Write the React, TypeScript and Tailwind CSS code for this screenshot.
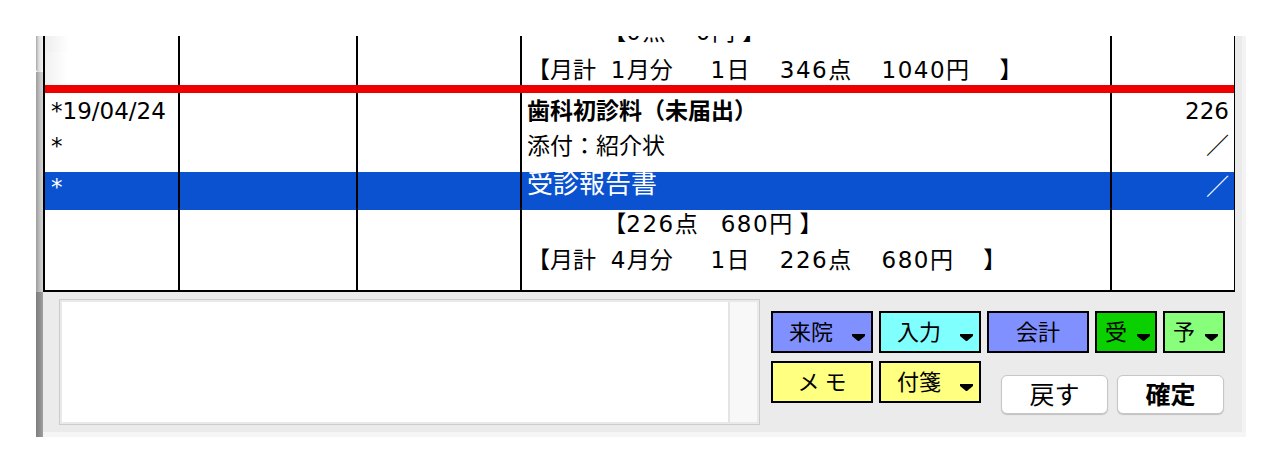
import type { ReactNode } from "react";

const tableFont = "font-['DejaVu_Sans','Noto_Sans_CJK_JP',sans-serif]";

type RowProps = {
  cells: ReactNode[];
  rowClass: string;
  cellClass?: string;
  cellClasses?: string[];
};

// widths include the 2px right rule of each cell
const widths = ["w-[135px]", "w-[178px]", "w-[164px]", "w-[590px]", "w-[122px]"];
const aligns = [
  "pl-[6px]",
  "",
  "",
  "pl-[5px]",
  "justify-end pr-[5px]",
];

function Row({ cells, rowClass, cellClass = "", cellClasses = [] }: RowProps) {
  return (
    <div className={`flex shrink-0 ${rowClass}`}>
      {cells.map((c, i) => (
        <div
          key={i}
          className={`flex h-full items-center whitespace-pre ${widths[i]} ${aligns[i]} ${
            i < 4 ? "border-r-2 border-black" : ""
          } ${cellClasses[i] ?? cellClass}`}
        >
          {c}
        </div>
      ))}
    </div>
  );
}

// figures in the totals lines run a little wider than the body text
function Num({ children }: { children: ReactNode }) {
  return <span className="tracking-[1.5px]">{children}</span>;
}

function Caret() {
  return (
    <svg width="13" height="7" viewBox="0 0 13 7" className="shrink-0">
      <path d="M0 0H13V2L7 7H6L0 2Z" fill="#000" />
    </svg>
  );
}

type KeyProps = {
  label: string;
  bg: string;
  width: string;
  caret?: boolean;
  pad?: string;
  caretPad?: string;
};

function Key({ label, bg, width, caret, pad = "pl-[16px]", caretPad = "mr-[6px]" }: KeyProps) {
  return (
    <div className={`flex h-[42px] ${width} border-2 border-black ${bg}`}>
      {caret ? (
        <>
          <span className={`self-center pb-[5px] text-[22px] leading-none ${pad}`}>{label}</span>
          <span className={`mb-[10px] ml-auto self-end ${caretPad}`}>
            <Caret />
          </span>
        </>
      ) : (
        <span className="flex-1 self-center whitespace-pre pb-[5px] text-center text-[22px] leading-none">
          {label}
        </span>
      )}
    </div>
  );
}

function PlainButton({ label, bold }: { label: string; bold?: boolean }) {
  return (
    <div
      className={`flex h-[39px] w-[107px] items-center justify-center rounded-[6px] border border-[#c6c6c6] bg-white pb-[3px] text-[25px] leading-none shadow-[0_1px_1px_rgba(0,0,0,0.18)] ${
        bold ? "font-bold" : ""
      }`}
    >
      {label}
    </div>
  );
}

export default function App() {
  return (
    <div className={`h-[474px] w-[1282px] bg-white pt-[36px] pl-[36px] text-black ${tableFont}`}>
      <div className="flex w-[1210px]">
        {/* window edge */}
        <div className="flex w-[7px] flex-col">
          <div className="h-[36px] rounded-b-[3px] bg-[linear-gradient(90deg,#a9a9a9,#dedede_40%,#f2f2f2)]" />
          <div className="h-[220px] bg-[linear-gradient(90deg,#9c9c9c,#c4c4c4_60%,#d6d6d6)]" />
          <div className="h-[145px] bg-[linear-gradient(90deg,#7e7e7e,#8f8f8f_60%,#a0a0a0)]" />
        </div>

        <div className="flex w-[1203px] flex-col">
          <div className="flex">
            <div className="flex w-[1199px] flex-col bg-[#ebebeb]">
              {/* record list */}
              <div className="w-[1192px] border-r border-b-2 border-l-2 border-black bg-white">
                <div className="flex h-[254px] flex-col overflow-hidden leading-[28px]">
                  <Row
                    rowClass="-mt-[24px] h-[40px] text-[23px]"
                    cellClasses={["bg-[linear-gradient(90deg,#ededed,#ffffff_24px)]"]}
                    cells={[
                      "",
                      "",
                      "",
                      <>
                        {"　　　 【"}
                        <Num>0</Num>
                        {"点　 "}
                        <Num>0</Num>
                        {"円 】"}
                      </>,
                      "",
                    ]}
                  />
                  <Row
                    rowClass="h-[33px] text-[23px]"
                    cellClass="pt-[3px]"
                    cellClasses={["pt-[3px] bg-[linear-gradient(90deg,#f0f0f0,#ffffff_22px)]"]}
                    cells={[
                      "",
                      "",
                      "",
                      <>
                        {"【月計  "}
                        <Num>1</Num>
                        {"月分　  "}
                        <Num>1</Num>
                        {"日　 "}
                        <Num>346</Num>
                        {"点　 "}
                        <Num>1040</Num>
                        {"円　 】"}
                      </>,
                      "",
                    ]}
                  />
                  <div className="h-[8px] shrink-0 bg-[#ee0000]" />
                  <Row
                    rowClass="h-[35px] text-[23px]"
                    cells={[
                      "*19/04/24",
                      "",
                      "",
                      <span className="font-bold">歯科初診料（未届出）</span>,
                      "226",
                    ]}
                  />
                  <Row
                    rowClass="h-[44px] text-[23px]"
                    cellClass="pb-[8px]"
                    cells={["*", "", "", "添付：紹介状", "／"]}
                  />
                  <Row
                    rowClass="h-[38px] bg-[#0a52d0] text-white text-[23px]"
                    cellClasses={["pb-[8px]", "", "", "pb-[14px] text-[26px]", "pb-[8px]"]}
                    cells={["*", "", "", "受診報告書", "／"]}
                  />
                  <Row
                    rowClass="h-[28px] text-[23px]"
                    cells={[
                      "",
                      "",
                      "",
                      <>
                        {"　　　 【"}
                        <Num>226</Num>
                        {"点　"}
                        <Num>680</Num>
                        {"円 】"}
                      </>,
                      "",
                    ]}
                  />
                  <Row
                    rowClass="h-[52px] text-[23px]"
                    cellClass="pb-[8px]"
                    cells={[
                      "",
                      "",
                      "",
                      <>
                        {"【月計  "}
                        <Num>4</Num>
                        {"月分　  "}
                        <Num>1</Num>
                        {"日　 "}
                        <Num>226</Num>
                        {"点　 "}
                        <Num>680</Num>
                        {"円　 】"}
                      </>,
                      "",
                    ]}
                  />
                </div>
              </div>

              {/* memo and actions */}
              <div className="flex h-[140px] font-['Noto_Sans_CJK_JP',sans-serif]">
                <div className="mt-[7px] ml-[16px] flex h-[126px] w-[701px] border border-[#cccccc] bg-[#e9e9e9] p-[2px]">
                  <div className="flex-1 bg-white" />
                  <div className="w-[29px] border-l-2 border-[#e4e4e4] bg-[#f8f8f8]" />
                </div>

                <div className="ml-[11px] flex flex-col pt-[19px]">
                  <div className="flex gap-[6px]">
                    <Key label="来院" bg="bg-[#8090ff]" width="w-[102px]" caret pad="pl-[16px]" />
                    <Key label="入力" bg="bg-[#80ffff]" width="w-[102px]" caret pad="pl-[16px]" />
                    <Key label="会計" bg="bg-[#8090ff]" width="w-[102px]" />
                    <Key
                      label="受"
                      bg="bg-[#0ad000]"
                      width="w-[62px]"
                      caret
                      pad="pl-[8px]"
                      caretPad="mr-[5px]"
                    />
                    <Key
                      label="予"
                      bg="bg-[#88ff7a]"
                      width="w-[62px]"
                      caret
                      pad="pl-[8px]"
                      caretPad="mr-[5px]"
                    />
                  </div>
                  <div className="mt-[8px] flex">
                    <Key label="メ モ" bg="bg-[#ffff80]" width="w-[102px]" />
                    <div className="ml-[6px]">
                      <Key label="付箋" bg="bg-[#ffff80]" width="w-[102px]" caret pad="pl-[16px]" />
                    </div>
                    <div className="mt-[14px] ml-[20px] flex gap-[9px]">
                      <PlainButton label="戻す" />
                      <PlainButton label="確定" bold />
                    </div>
                  </div>
                </div>
              </div>
            </div>
            <div className="w-[4px] bg-[#f3f3f3]" />
          </div>
          <div className="h-[5px] bg-[#f5f5f5]" />
        </div>
      </div>
    </div>
  );
}
